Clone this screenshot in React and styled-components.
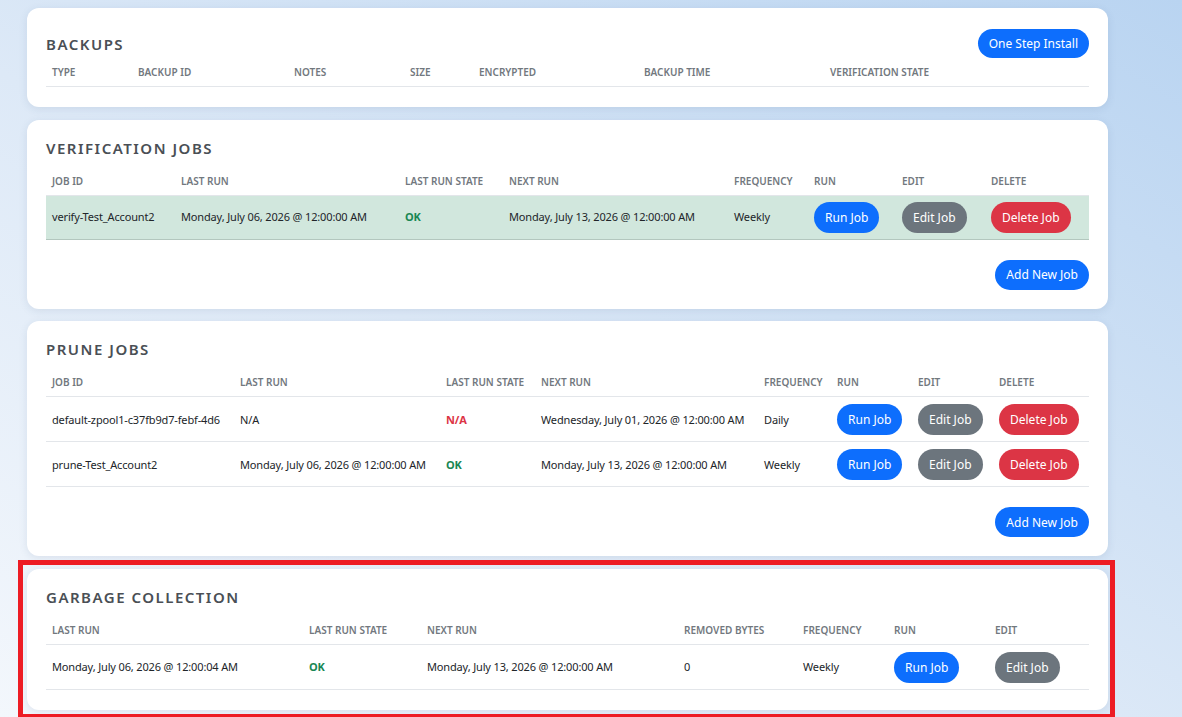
import React from "react";
import styled, { createGlobalStyle } from "styled-components";

const GlobalStyle = createGlobalStyle`
  html, body { margin: 0; padding: 0; }
  body {
    font-family: "Noto Sans", "Open Sans", Arial, sans-serif;
    color: #212529;
    background: linear-gradient(to top right, #f3f7fc 0%, #dde9f7 45%, #b9d4f1 100%);
    min-height: 100vh;
    overflow: hidden;
  }
`;

const Page = styled.div`
  padding: 8px 0 0 27px;
  width: 1081px;
  display: flex;
  flex-direction: column;
  gap: 12.5px;
`;

const Card = styled.section`
  position: relative;
  background: #fff;
  border-radius: 12px;
  box-shadow: 0 2px 8px rgba(40, 70, 110, 0.1);
  padding: 17px 19px 20px;
  display: flex;
  flex-direction: column;

  ${(p) =>
    p.$highlight &&
    `
    &::after {
      content: "";
      position: absolute;
      top: -9px; left: -9px; right: -7px; bottom: -9px;
      border: 5px solid #ed1c24;
      pointer-events: none;
    }
  `}
`;

const CardHeader = styled.div`
  display: flex;
  align-items: center;
  justify-content: space-between;
  margin-top: ${(p) => (p.$compact ? "4px" : "0")};
  margin-bottom: ${(p) => (p.$compact ? "0" : "8px")};
`;

const Title = styled.h2`
  margin: 0;
  font-size: 15px;
  line-height: 22px;
  font-weight: 600;
  letter-spacing: 1.5px;
  color: #4a4f55;
  text-transform: uppercase;
`;

const Table = styled.table`
  width: 100%;
  border-collapse: collapse;
  table-layout: fixed;
`;

const Col = styled.col`
  width: ${(p) => p.$w}px;
`;

const Th = styled.th`
  text-align: left;
  font-size: 10px;
  font-weight: 600;
  color: #72787e;
  text-transform: uppercase;
  padding: 8px 6px 7px;
  line-height: 13px;
  border-bottom: 1px solid #e3e6ea;
  white-space: nowrap;
`;

const Tr = styled.tr`
  background: ${(p) => (p.$success ? "#d1e7dd" : "transparent")};
  & > td {
    padding-top: ${(p) => (p.$success ? "6px" : "7px")};
    border-bottom: 1px solid ${(p) => (p.$success ? "#b3c7be" : "#e3e6ea")};
  }
`;

const Td = styled.td`
  font-size: 11px;
  letter-spacing: -0.15px;
  line-height: 18px;
  padding: 7px 6px 6px;
  vertical-align: middle;
  white-space: nowrap;
  overflow: hidden;
  color: #212529;
`;

const State = styled.span`
  font-weight: 700;
  color: ${(p) => (p.$ok ? "#198754" : "#dc3545")};
`;

const COLORS = {
  primary: "#0d6efd",
  secondary: "#6c757d",
  danger: "#dc3545",
};

const PADS = {
  xs: "5px 11px",
  sm: "5.5px 11px",
  md: "6px 11px",
};

const Button = styled.button`
  display: inline-block;
  vertical-align: middle;
  font-family: inherit;
  font-size: 12px;
  letter-spacing: 0;
  line-height: 19px;
  padding: ${(p) => PADS[p.$size || "md"]};
  border: none;
  border-radius: 999px;
  color: #fff;
  background: ${(p) => COLORS[p.$variant || "primary"]};
  cursor: pointer;
  white-space: nowrap;
`;

const Footer = styled.div`
  display: flex;
  justify-content: flex-end;
  margin-top: 20px;
  margin-bottom: -1px;
`;

function Grid({ cols, headers, children }) {
  return (
    <Table>
      <colgroup>
        {cols.map((w, i) => (
          <Col key={i} $w={w} />
        ))}
      </colgroup>
      <thead>
        <tr>
          {headers.map((h) => (
            <Th key={h}>{h}</Th>
          ))}
        </tr>
      </thead>
      <tbody>{children}</tbody>
    </Table>
  );
}

const Actions = ({ del = true }) => (
  <>
    <Td>
      <Button $variant="primary">Run Job</Button>
    </Td>
    <Td>
      <Button $variant="secondary">Edit Job</Button>
    </Td>
    {del && (
      <Td>
        <Button $variant="danger">Delete Job</Button>
      </Td>
    )}
  </>
);

export default function App() {
  return (
    <>
      <GlobalStyle />
      <Page>
        <Card>
          <CardHeader $compact>
            <Title>Backups</Title>
            <Button $size="xs">One Step Install</Button>
          </CardHeader>
          <Grid
            cols={[86, 156, 116, 69, 165, 186, 265]}
            headers={[
              "Type",
              "Backup ID",
              "Notes",
              "Size",
              "Encrypted",
              "Backup Time",
              "Verification State",
            ]}
          />
        </Card>

        <Card>
          <CardHeader>
            <Title>Verification Jobs</Title>
          </CardHeader>
          <Grid
            cols={[129, 224, 104, 225, 80, 88, 89, 104]}
            headers={[
              "Job ID",
              "Last Run",
              "Last Run State",
              "Next Run",
              "Frequency",
              "Run",
              "Edit",
              "Delete",
            ]}
          >
            <Tr $success>
              <Td>verify-Test_Account2</Td>
              <Td>Monday, July 06, 2026 @ 12:00:00 AM</Td>
              <Td>
                <State $ok>OK</State>
              </Td>
              <Td>Monday, July 13, 2026 @ 12:00:00 AM</Td>
              <Td>Weekly</Td>
              <Actions />
            </Tr>
          </Grid>
          <Footer>
            <Button $size="sm">Add New Job</Button>
          </Footer>
        </Card>

        <Card>
          <CardHeader>
            <Title>Prune Jobs</Title>
          </CardHeader>
          <Grid
            cols={[188, 206, 95, 223, 73, 81, 81, 96]}
            headers={[
              "Job ID",
              "Last Run",
              "Last Run State",
              "Next Run",
              "Frequency",
              "Run",
              "Edit",
              "Delete",
            ]}
          >
            <Tr>
              <Td>default-zpool1-c37fb9d7-febf-4d6</Td>
              <Td>N/A</Td>
              <Td>
                <State>N/A</State>
              </Td>
              <Td>Wednesday, July 01, 2026 @ 12:00:00 AM</Td>
              <Td>Daily</Td>
              <Actions />
            </Tr>
            <Tr>
              <Td>prune-Test_Account2</Td>
              <Td>Monday, July 06, 2026 @ 12:00:00 AM</Td>
              <Td>
                <State $ok>OK</State>
              </Td>
              <Td>Monday, July 13, 2026 @ 12:00:00 AM</Td>
              <Td>Weekly</Td>
              <Actions />
            </Tr>
          </Grid>
          <Footer>
            <Button $size="sm">Add New Job</Button>
          </Footer>
        </Card>

        <Card $highlight>
          <CardHeader>
            <Title>Garbage Collection</Title>
          </CardHeader>
          <Grid
            cols={[257, 118, 257, 119, 91, 101, 100]}
            headers={[
              "Last Run",
              "Last Run State",
              "Next Run",
              "Removed Bytes",
              "Frequency",
              "Run",
              "Edit",
            ]}
          >
            <Tr>
              <Td>Monday, July 06, 2026 @ 12:00:04 AM</Td>
              <Td>
                <State $ok>OK</State>
              </Td>
              <Td>Monday, July 13, 2026 @ 12:00:00 AM</Td>
              <Td>0</Td>
              <Td>Weekly</Td>
              <Actions del={false} />
            </Tr>
          </Grid>
        </Card>
      </Page>
    </>
  );
}
